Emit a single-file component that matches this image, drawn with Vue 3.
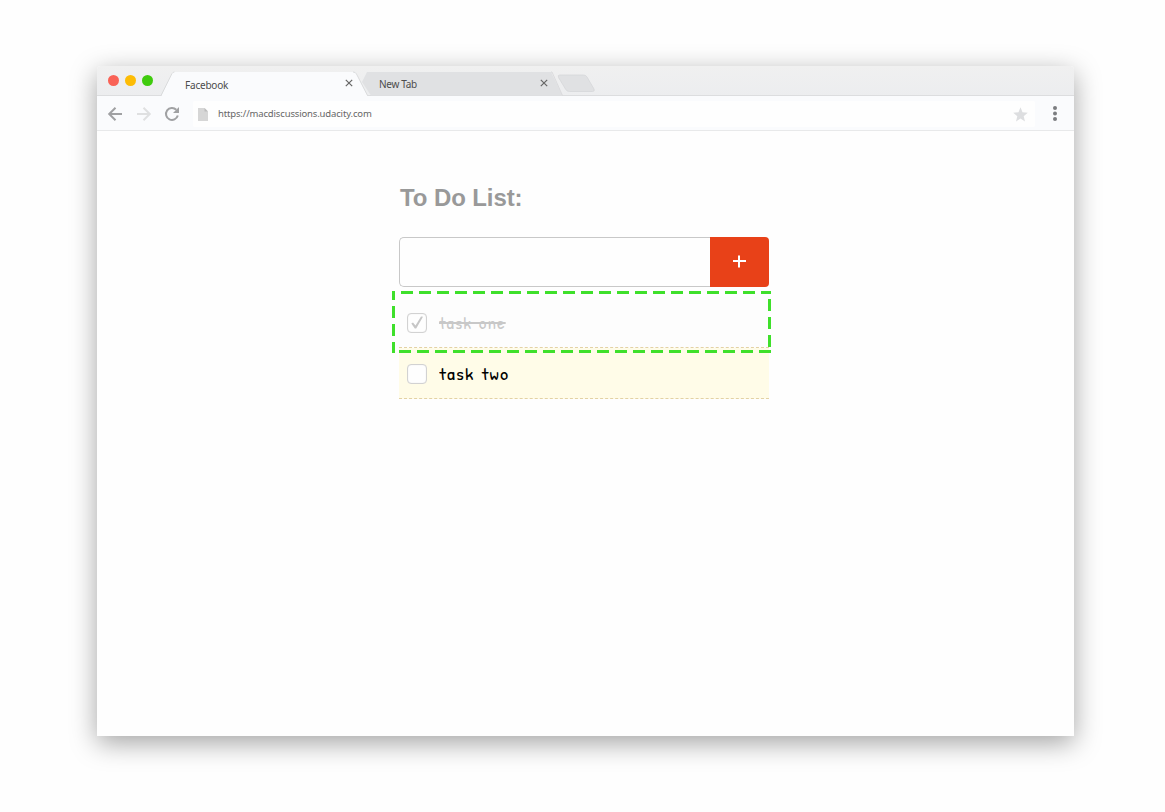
<script setup>
import { ref } from 'vue'

const draft = ref('')
const tasks = ref([
  { id: 1, label: 'task one', done: true },
  { id: 2, label: 'task two', done: false },
])

function addTask() {
  const label = draft.value.trim()
  if (!label) return
  tasks.value.push({ id: Date.now(), label, done: false })
  draft.value = ''
}
</script>

<template>
  <div class="stage">
    <div class="window">
      <header class="tabs">
        <svg class="tab-art" width="977" height="31" viewBox="0 0 977 31">
          <path d="M0 29.5H977" stroke="#dcdddf" />
          <path d="M265 16L270 6H454L465.500 29.500H274Z" fill="#e0e1e3" />
          <path d="M454 6H455L465.500 29.500" fill="none" stroke="#d5d6d8" stroke-width=".8" />
          <path d="M462.500 9H486.500Q489 9 490 11L497 23Q498 25.500 495.500 25.500H472.500Q469.500 25.500 468.500 23L461.500 11.500Q460.500 9 462.500 9Z" fill="#e0e1e3" stroke="#d6d7d9" stroke-width=".8" />
          <path d="M64 31L75 7.500Q76 6 77.500 6H256Q258.500 6 259.500 8L271 31Z" fill="#fafbfd" />
          <path d="M64 29.500L75 7.500Q76 6 77.500 6M256 6Q258.500 6 259.500 8L270.500 29.500" fill="none" stroke="#d4d5d7" stroke-width=".8" />
        </svg>
        <div class="lights"><i class="red"></i><i class="amber"></i><i class="green"></i></div>
        <div class="tab current">
          <span>Facebook</span>
          <svg width="8" height="8" viewBox="0 0 8 8"><path d="M.8.8L7.200 7.200M7.200.8L.8 7.200" /></svg>
        </div>
        <div class="tab other">
          <span>New Tab</span>
          <svg width="8" height="8" viewBox="0 0 8 8"><path d="M.8.8L7.200 7.200M7.200.8L.8 7.200" /></svg>
        </div>
      </header>

      <nav class="toolbar">
        <svg class="nav-icons" width="84" height="18" viewBox="0 0 84 18" fill="none" stroke-width="2">
          <path d="M15 9H2.500M8.500 2.700L2.200 9L8.500 15.300" stroke="#a0a1a3" />
          <path d="M30 9H42.500M36.500 2.700L42.800 9L36.500 15.300" stroke="#dfe0e1" />
          <path d="M69.300 4.700A6 6 0 1 0 70.800 10.500" stroke="#a0a1a3" />
          <path d="M72 2V8H66Z" fill="#a0a1a3" />
        </svg>
        <div class="address">
          <svg class="page-icon" width="10" height="13" viewBox="0 0 10 13">
            <path d="M0 0H6.500L10 3.500V13H0Z" fill="#d6d6d6" /><path d="M6.500 0L10 3.500H6.500Z" fill="#bcbcbc" />
          </svg>
          <span>https://macdiscussions.udacity.com</span>
          <svg class="star" width="15" height="15" viewBox="0 0 15 15">
            <path d="M7.500.3L9.500 5.300L14.800 5.700L10.700 9.200L12 14.500L7.500 11.600L3 14.500L4.300 9.200L.2 5.700L5.500 5.300Z" fill="#dddee0" />
          </svg>
        </div>
        <svg class="menu" width="4" height="15" viewBox="0 0 4 15" fill="#7b7d80">
          <circle cx="2" cy="2" r="2" /><circle cx="2" cy="7.500" r="2" /><circle cx="2" cy="13" r="2" />
        </svg>
      </nav>

      <main class="page">
        <h1>To Do List:</h1>
        <form class="entry" @submit.prevent="addTask">
          <input v-model="draft" type="text" />
          <button type="submit">
            <svg width="13" height="13" viewBox="0 0 13 13"><path d="M6 .500V12.500M0 6H13" stroke="#fff" stroke-width="2" /></svg>
          </button>
        </form>
        <div class="list">
          <label v-for="task in tasks" :key="task.id" class="task" :class="{ done: task.done }">
            <input v-model="task.done" type="checkbox" />
            <span class="box">
              <svg v-if="task.done" width="12" height="13" viewBox="0 0 12 13">
                <path d="M.3 7.600L2 6.500L4.500 9.600L10 .5L12 .7L5.200 12.500H3.800Z" fill="#c6c6c6" />
              </svg>
            </span>
            <span class="label">{{ task.label }}</span>
          </label>
          <svg class="highlight" width="379" height="62" viewBox="0 0 379 62" fill="none" stroke="#3fe02b" stroke-width="3" stroke-dasharray="12 6">
            <path d="M9 1.500H379" />
            <path d="M7 60.500H379" />
            <path d="M1.500 0V62" stroke-dashoffset="3" />
            <path d="M377.500 8V57" />
          </svg>
        </div>
      </main>
    </div>
  </div>
</template>

<style>
body {
  margin: 0;
  background: #fefefe;
}
</style>

<style scoped>
.stage {
  box-sizing: border-box;
  width: 1165px;
  height: 812px;
  padding: 66px 91px 76px 97px;
  overflow: hidden;
  background: #fefefe;
}
.window {
  display: flex;
  flex-direction: column;
  width: 977px;
  height: 670px;
  border-radius: 4px 4px 0 0;
  background: #fefefe;
  box-shadow: 0 7px 27px rgba(0, 0, 0, 0.36);
}
.tabs {
  position: relative;
  display: flex;
  height: 30px;
  border-radius: 4px 4px 0 0;
  background: linear-gradient(#f0f0f0, #ecedef);
  font: 10px/12px "Noto Sans", sans-serif;
  color: #4c4c4c;
}
.tab-art {
  position: absolute;
  inset: 0 auto auto 0;
}
.lights {
  position: relative;
  display: flex;
  gap: 6px;
  padding: 9.400px 0 0 11.400px;
}
.lights i {
  width: 11px;
  height: 11px;
  border-radius: 50%;
}
.red { background: #f96256; }
.amber { background: #fdbc05; }
.green { background: #3fcb0d; }
.tab {
  position: relative;
  display: flex;
  justify-content: space-between;
}
.tab svg {
  stroke: #666;
  stroke-width: 1.200;
  fill: none;
}
.current {
  width: 168px;
  margin-left: 31.600px;
  padding-top: 13px;
  letter-spacing: -0.2px;
}
.current svg { margin-top: 0.4px; }
.other {
  width: 169px;
  margin-left: 26px;
  padding-top: 12px;
  letter-spacing: -0.3px;
}
.other svg { margin-top: 1.400px; }
.toolbar {
  display: flex;
  align-items: center;
  box-sizing: border-box;
  height: 35px;
  border-bottom: 1px solid #e8e9ea;
  background: #fafbfd;
}
.nav-icons { margin: 1px 0 0 10px; }
.address {
  display: flex;
  align-items: center;
  width: 842px;
  height: 26px;
  margin: 1px 0 0 2px;
  border-radius: 2px;
  background: #fefefe;
  font: 9.500px/13px "Noto Sans", sans-serif;
  letter-spacing: -0.150px;
  color: #666;
}
.page-icon { margin: 2px 10px 0 5px; }
.star { margin: 1px 7px 0 auto; }
.menu { margin: 1px 0 0 18px; }
.page {
  width: 370px;
  padding: 49px 0 0 302px;
}
h1 {
  margin: 0 0 22px 1px;
  font: bold 24px/35px "Liberation Sans", Arial, sans-serif;
  letter-spacing: -0.1px;
  color: #999;
}
.entry {
  display: flex;
  height: 50px;
}
.entry input {
  box-sizing: border-box;
  width: 311px;
  padding: 0 12px;
  border: 1px solid #c8c8c8;
  border-right: 0;
  border-radius: 5px 0 0 5px;
  outline: 0;
  background: #fefefe;
  font-size: 16px;
}
.entry button {
  display: flex;
  align-items: center;
  justify-content: center;
  width: 59px;
  padding: 0 0 1px;
  border: 0;
  border-radius: 0 4px 4px 0;
  background: #e84118;
}
.list {
  position: relative;
  margin-top: 10px;
}
.task {
  display: flex;
  align-items: center;
  box-sizing: border-box;
  height: 51px;
  padding: 1px 0 0 8px;
  border-bottom: 1px dashed #e3d2a4;
  background: #fffce8;
}
.task.done {
  background: #fdfdfd;
}
.task input {
  position: absolute;
  opacity: 0;
}
.box {
  display: flex;
  align-items: center;
  justify-content: center;
  box-sizing: border-box;
  width: 20px;
  height: 20px;
  border: 1px solid #d2d2d2;
  border-radius: 4px;
  background: #fefefe;
  box-shadow: inset 0 0 1px #d2d2d2;
}
.label {
  margin: 0 0 0 12px;
  font: 16px/20px "Patrick Hand", "Noto Sans", sans-serif;
  letter-spacing: 0.9px;
  word-spacing: 1px;
  transform: scaleX(1.26);
  transform-origin: left center;
  color: #000;
}
.done .label {
  color: #c8c8c8;
  text-decoration: line-through;
  text-decoration-thickness: 2px;
  transform: scaleX(1.18);
}
.highlight {
  position: absolute;
  top: -6px;
  left: -7px;
  pointer-events: none;
}
</style>
